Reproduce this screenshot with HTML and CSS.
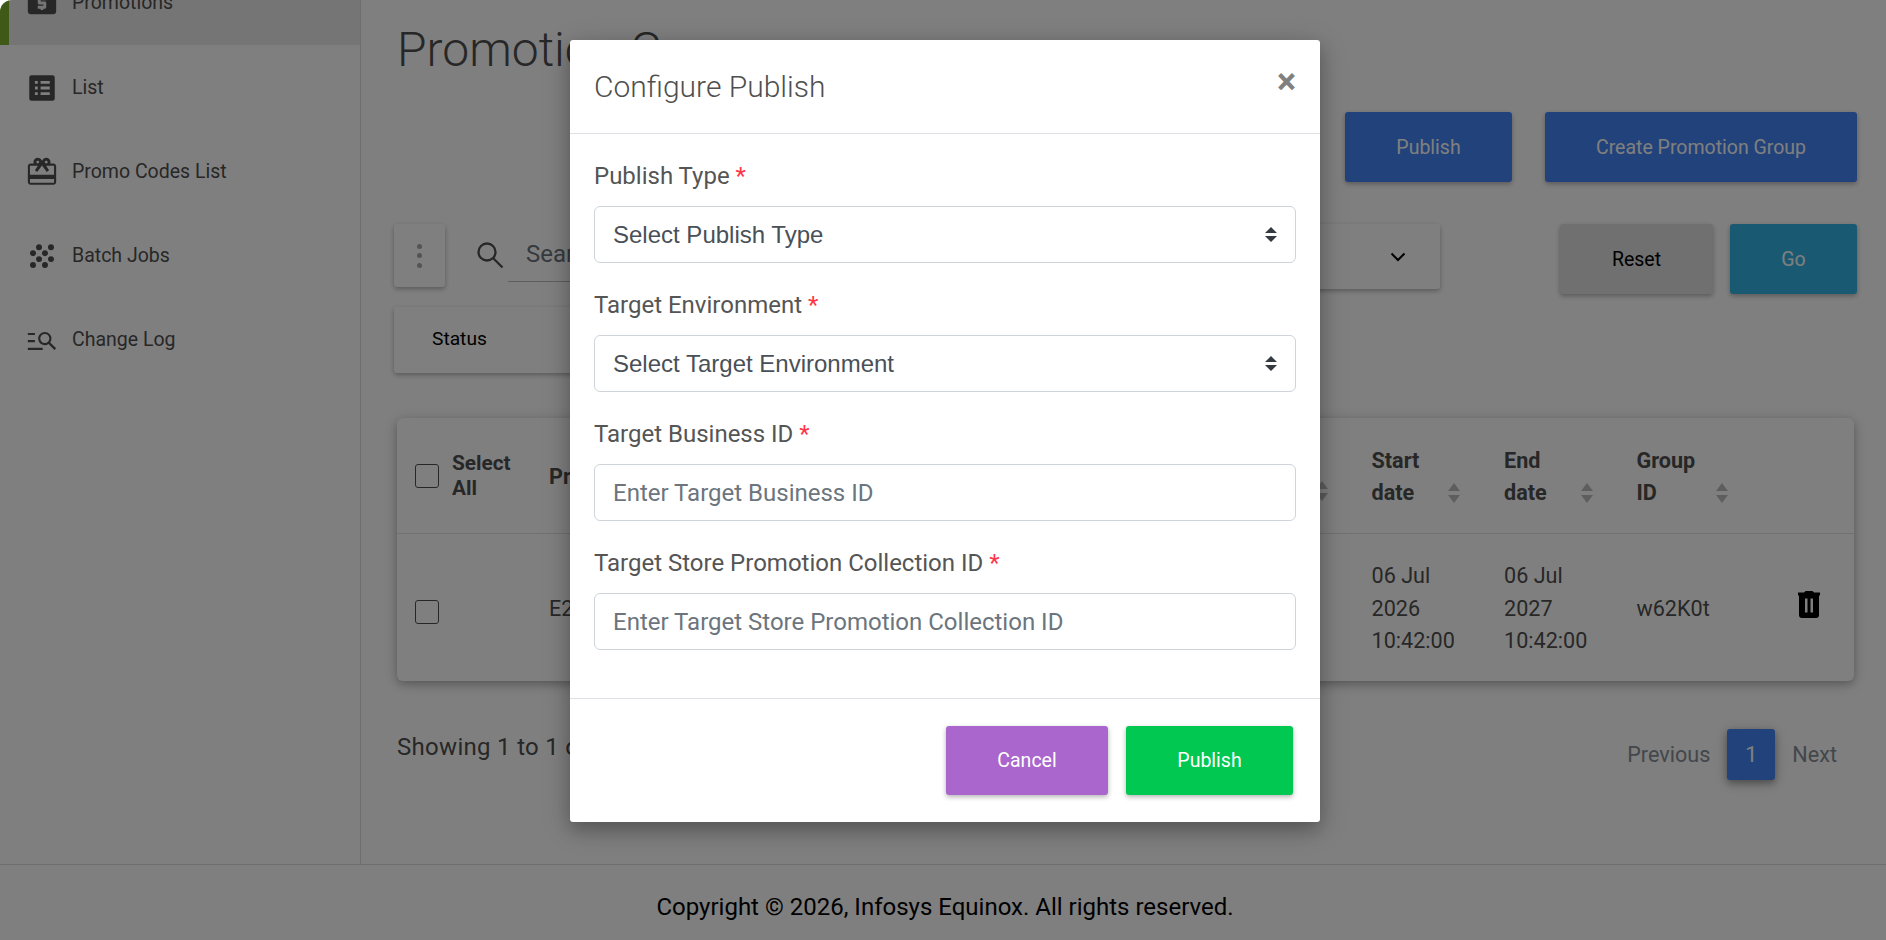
FILE: index.html
```html
<!DOCTYPE html>
<html lang="en">
<head>
    <meta charset="UTF-8">
    <meta name="viewport" content="width=device-width, initial-scale=1.0">
    <title>Promotion Groups</title>
    <link rel="stylesheet" href="styles.css">
</head>
<body>
    <div class="app">
        <div class="page">
            <nav class="sidebar">
                <a class="nav-item active">
                    <svg class="nav-icon" viewBox="0 0 24 24"><path d="M20 4H4c-1.110 0-2 .9-2 2v12c0 1.100.89 2 2 2h16c1.110 0 2-.9 2-2V6c0-1.100-.89-2-2-2zm-5 6h-4v1h3c.55 0 1 .45 1 1v3c0 .55-.45 1-1 1h-1v1h-2v-1H9v-2h4v-1h-3c-.55 0-1-.45-1-1V9c0-.55.45-1 1-1h1V7h2v1h2v2z"/></svg>
                    <span>Promotions</span>
                </a>
                <a class="nav-item">
                    <svg class="nav-icon" viewBox="0 0 24 24"><path d="M19.500 3h-15A1.500 1.500 0 0 0 3 4.500v15A1.500 1.500 0 0 0 4.500 21h15a1.500 1.500 0 0 0 1.500-1.500v-15A1.500 1.500 0 0 0 19.500 3zM9 17H7v-2h2v2zm0-4H7v-2h2v2zm0-4H7V7h2v2zm8.500 8H11v-2h6.500v2zm0-4H11v-2h6.500v2zm0-4H11V7h6.500v2z"/></svg>
                    <span>List</span>
                </a>
                <a class="nav-item">
                    <svg class="nav-icon" viewBox="0 0 24 24"><path d="M20 6h-2.180c.11-.31.18-.65.18-1 0-1.660-1.340-3-3-3-1.050 0-1.960.54-2.500 1.350l-.5.670-.5-.68C10.960 2.540 10.050 2 9 2 7.340 2 6 3.340 6 5c0 .35.07.69.18 1H4c-1.110 0-1.990.89-1.990 2L2 19c0 1.110.89 2 2 2h16c1.110 0 2-.89 2-2V8c0-1.110-.89-2-2-2zm-5-2c.55 0 1 .45 1 1s-.45 1-1 1-1-.45-1-1 .45-1 1-1zM9 4c.55 0 1 .45 1 1s-.45 1-1 1-1-.45-1-1 .45-1 1-1zm11.500 15.500h-17V17h17v2.500zm0-5.500h-17V7.500h5.580L7 10.830 8.620 12 12 7.400l3.380 4.600L17 10.830 14.920 7.500h5.580V14z"/></svg>
                    <span>Promo Codes List</span>
                </a>
                <a class="nav-item">
                    <svg class="nav-icon" viewBox="0 0 24 24"><circle cx="9.900" cy="5.800" r="2.100"/><circle cx="18.350" cy="5.800" r="2.100"/><circle cx="5.650" cy="10" r="2.100"/><circle cx="14.100" cy="10" r="2.100"/><circle cx="9.900" cy="14.200" r="2.100"/><circle cx="18.350" cy="14.200" r="2.100"/><circle cx="5.650" cy="18.400" r="2.100"/><circle cx="14.100" cy="18.400" r="2.100"/></svg>
                    <span>Batch Jobs</span>
                </a>
                <a class="nav-item">
                    <svg class="nav-icon" viewBox="0 0 24 24"><path d="M7 8.500H2V7h5v1.500zM7 12H2v1.500h5V12zm13.800 7l-4.200-4.200c-.8.600-1.700.9-2.600.9-2.760 0-4.700-2.200-4.700-4.700s2.100-4.700 4.700-4.700 4.700 2.100 4.700 4.700c0 1-.3 1.900-.9 2.700L22 17.900 20.800 19zM17.200 11c0-1.800-1.400-3.200-3.200-3.200S10.800 9.200 10.800 11s1.400 3.200 3.200 3.200 3.200-1.400 3.200-3.200zM2 19h10.500v-1.500H2V19z"/></svg>
                    <span>Change Log</span>
                </a>
            </nav>

            <main class="main">
                <h1 class="page-title">Promotion Groups</h1>

                <div class="actions">
                    <button class="btn btn-blue">Publish</button>
                    <button class="btn btn-blue">Create Promotion Group</button>
                </div>

                <div class="filters">
                    <button class="kebab"><i></i><i></i><i></i></button>
                    <svg class="search-icon" viewBox="0 0 27 27"><circle cx="10" cy="10" r="8.500"/><path d="M16 16l9.500 9.500"/></svg>
                    <input class="search" type="text" placeholder="Search">
                    <div class="dropdown">
                        <svg class="chevron" viewBox="0 0 16 10"><path d="M1.500 1.500L8 8l6.500-6.500"/></svg>
                    </div>
                    <button class="btn btn-grey">Reset</button>
                    <button class="btn btn-cyan">Go</button>
                </div>

                <div class="dropdown status">Status</div>

                <table class="groups">
                    <colgroup>
                        <col class="col-check"><col class="col-name"><col>
                        <col class="col-date"><col class="col-date"><col class="col-date"><col class="col-action">
                    </colgroup>
                    <thead>
                        <tr>
                            <th class="check"><div class="select-all"><span class="box"></span><span>Select<br>All</span></div></th>
                            <th>Promotion</th>
                            <th><div class="sortable end"><svg class="sort" viewBox="0 0 14 22"><path d="M7 1l6 8H1zM7 21l6-8H1z"/></svg></div></th>
                            <th><div class="sortable"><span>Start<br>date</span><svg class="sort" viewBox="0 0 14 22"><path d="M7 1l6 8H1zM7 21l6-8H1z"/></svg></div></th>
                            <th><div class="sortable"><span>End<br>date</span><svg class="sort" viewBox="0 0 14 22"><path d="M7 1l6 8H1zM7 21l6-8H1z"/></svg></div></th>
                            <th><div class="sortable last"><span>Group<br>ID</span><svg class="sort" viewBox="0 0 14 22"><path d="M7 1l6 8H1zM7 21l6-8H1z"/></svg></div></th>
                            <th></th>
                        </tr>
                    </thead>
                    <tbody>
                        <tr>
                            <td class="check"><div class="box"></div></td>
                            <td>E2E</td>
                            <td></td>
                            <td>06 Jul<br>2026<br>10:42:00</td>
                            <td>06 Jul<br>2027<br>10:42:00</td>
                            <td>w62K0t</td>
                            <td><svg class="trash" viewBox="0 0 22 27"><path d="M0 1.500h6L7.500 0h7L16 1.500h6v3h-1V24a3 3 0 0 1-3 3H4a3 3 0 0 1-3-3V4.500H0zM7 7.500v14h2.500v-14zm5.500 0v14H15v-14z"/></svg></td>
                        </tr>
                    </tbody>
                </table>

                <div class="table-foot">
                    <p class="showing">Showing 1 to 1 of 1 entries</p>
                    <div class="pagination">
                        <span>Previous</span>
                        <span class="current">1</span>
                        <span>Next</span>
                    </div>
                </div>
            </main>
        </div>

        <footer class="footer">Copyright © 2026, Infosys Equinox. All rights reserved.</footer>

        <div class="backdrop">
            <div class="modal">
                <div class="modal-header">
                    <h2 class="modal-title">Configure Publish</h2>
                    <button class="close">×</button>
                </div>
                <div class="modal-body">
                    <label class="label">Publish Type <b>*</b></label>
                    <div class="field select">
                        <span>Select Publish Type</span>
                        <svg class="arrows" viewBox="0 0 12 15"><path d="M6 0l6 6H0zM6 15l6-6H0z"/></svg>
                    </div>
                    <label class="label">Target Environment <b>*</b></label>
                    <div class="field select">
                        <span>Select Target Environment</span>
                        <svg class="arrows" viewBox="0 0 12 15"><path d="M6 0l6 6H0zM6 15l6-6H0z"/></svg>
                    </div>
                    <label class="label">Target Business ID <b>*</b></label>
                    <input class="field" type="text" placeholder="Enter Target Business ID">
                    <label class="label">Target Store Promotion Collection ID <b>*</b></label>
                    <input class="field" type="text" placeholder="Enter Target Store Promotion Collection ID">
                </div>
                <div class="modal-footer">
                    <button class="btn btn-purple">Cancel</button>
                    <button class="btn btn-green">Publish</button>
                </div>
            </div>
        </div>
    </div>
</body>
</html>
```
FILE: styles.css
```css
* {
    box-sizing: border-box;
}

body {
    margin: 0;
    background: #fff;
    font-family: Roboto, sans-serif;
    font-size: 24px;
    color: #4f4f4f;
}

h1, h2, p {
    margin: 0;
}

button, input {
    font-family: inherit;
    border: none;
    outline: none;
    background: none;
}

.app {
    position: relative;
    height: 940px;
    overflow: hidden;
    border-top-left-radius: 12px;
}

.page {
    display: flex;
    height: 864px;
}

/* Sidebar */
.sidebar {
    width: 361px;
    flex-shrink: 0;
    border-right: 1px solid #dcdcdc;
    overflow: hidden;
}

.nav-item {
    display: flex;
    align-items: center;
    gap: 13px;
    height: 84px;
    padding-left: 25px;
    font-size: 19.5px;
}

.nav-item.active {
    margin-top: -39px;
    padding: 0 0 2px 16px;
    border-left: 9px solid #7fb52f;
    background: #ebebeb;
}

.nav-icon {
    width: 34px;
    height: 34px;
    margin-top: 2px;
    fill: #4f4f4f;
}

/* Main */
.main {
    flex: 1;
    padding: 21px 29px 0 33px;
}

.page-title {
    height: 58px;
    padding-left: 3px;
    line-height: 58px;
    font-size: 48px;
    font-weight: 300;
}

.btn {
    height: 70px;
    padding: 0;
    border-radius: 3px;
    font-size: 19.5px;
    color: #fff;
    box-shadow: 0 2px 5px rgba(0, 0, 0, 0.3);
}

.actions {
    display: flex;
    justify-content: flex-end;
    gap: 33px;
    margin-top: 33px;
}

.btn-blue {
    width: 167px;
    background: #4285f4;
}

.btn-blue + .btn-blue {
    width: 312px;
}

.filters {
    display: flex;
    height: 70px;
    margin-top: 42px;
}

.kebab {
    display: flex;
    flex-direction: column;
    align-items: center;
    justify-content: center;
    gap: 4.500px;
    width: 51px;
    height: 63px;
    padding: 0;
    border-radius: 3px;
    box-shadow: 0 2px 5px rgba(0, 0, 0, 0.3);
}

.kebab i {
    width: 5px;
    height: 5px;
    border-radius: 50%;
    background: #a8a8a8;
}

.search-icon {
    width: 27px;
    height: 27px;
    margin: 18px 4px 0 32px;
    fill: none;
    stroke: #4f4f4f;
    stroke-width: 2.300;
}

.search {
    width: 332px;
    height: 58px;
    padding: 3px 0 0 18px;
    border-bottom: 1px solid #bdbdbd;
    font-size: 24px;
}

.search::placeholder,
.field::placeholder {
    color: #6c757d;
    opacity: 1;
}

.dropdown {
    display: flex;
    align-items: center;
    justify-content: flex-end;
    width: 500px;
    height: 65px;
    margin-left: 100px;
    padding-right: 34px;
    border-radius: 3px;
    box-shadow: 0 2px 5px rgba(0, 0, 0, 0.3);
}

.dropdown.status {
    justify-content: flex-start;
    width: 420px;
    height: 66px;
    margin: 13px 0 0;
    padding: 0 0 4px 38px;
    font-size: 19.2px;
    color: #000;
}

.chevron {
    width: 16px;
    height: 10px;
    fill: none;
    stroke: #000;
    stroke-width: 2;
}

.btn-grey {
    width: 153px;
    margin-left: auto;
    background: #e0e0e0;
    color: #000;
}

.btn-cyan {
    width: 127px;
    margin-left: 17px;
    background: #33b5e5;
}

/* Table */
.groups {
    width: 1457px;
    margin: 45px 0 0 3px;
    table-layout: fixed;
    border-collapse: separate;
    border-spacing: 0;
    border-radius: 6px;
    font-size: 21.6px;
    line-height: 32.4px;
    text-align: left;
    box-shadow: 0 3px 7px rgba(0, 0, 0, 0.16), 0 3px 15px rgba(0, 0, 0, 0.2);
}

.groups th,
.groups td {
    padding: 3px 0 0;
    vertical-align: middle;
}

.groups th {
    height: 116px;
    border-bottom: 1px solid #dee2e6;
    font-weight: 700;
}

.groups td {
    height: 147px;
}

.groups .check {
    padding: 1px 0 0 18px;
}

.groups td.check {
    padding-top: 8px;
}

.col-check { width: 152px; }
.col-name { width: 275px; }
.col-date { width: 132.5px; }
.col-action { width: 85px; }

.select-all {
    display: flex;
    align-items: center;
    gap: 13px;
    font-size: 20.8px;
    line-height: 25px;
}

.box {
    width: 24px;
    height: 24px;
    border: 1.500px solid #4f4f4f;
    border-radius: 3px;
}

.sortable {
    display: flex;
    align-items: flex-end;
    justify-content: space-between;
    padding-right: 43px;
}

.sortable.end {
    justify-content: flex-end;
    padding-top: 32px;
}

.sortable.last {
    padding-right: 40px;
}

.sort {
    width: 14px;
    height: 22px;
    margin-bottom: 5px;
    fill: #bdbdbd;
}

.trash {
    display: block;
    width: 22px;
    height: 27px;
    margin: -10px 0 0 29px;
}

.table-foot {
    display: flex;
    justify-content: space-between;
    margin-top: 48px;
    padding: 0 20px 0 3px;
}

.showing {
    line-height: 36px;
    letter-spacing: 0.3px;
}

.pagination {
    display: flex;
    gap: 17px;
    height: 51px;
    line-height: 51px;
    font-size: 21.6px;
    color: #868e96;
}

.current {
    width: 48px;
    border-radius: 3px;
    background: #4285f4;
    color: #fff;
    text-align: center;
    box-shadow: 0 3px 7px rgba(0, 0, 0, 0.3), 0 3px 15px rgba(0, 0, 0, 0.2);
}

.footer {
    height: 76px;
    padding-left: 4px;
    border-top: 1px solid #dcdcdc;
    line-height: 84px;
    text-align: center;
    color: #000;
}

/* Modal */
.backdrop {
    position: absolute;
    inset: 0;
    padding: 40px 0 0 4px;
    background: rgba(0, 0, 0, 0.5);
}

.modal {
    width: 750px;
    height: 782px;
    margin: 0 auto;
    background: #fff;
    border-radius: 3px;
    box-shadow: 0 8px 17px rgba(0, 0, 0, 0.2), 0 6px 30px rgba(0, 0, 0, 0.2);
}

.modal-header {
    display: flex;
    justify-content: space-between;
    height: 94px;
    padding: 24px;
    border-bottom: 1px solid #dee2e6;
}

.modal-title {
    line-height: 45px;
    font-size: 30px;
    font-weight: 300;
}

.close {
    height: 36px;
    padding: 0;
    line-height: 36px;
    font-size: 36px;
    font-weight: 700;
    color: #808080;
}

.modal-body {
    height: 564px;
    padding: 24px;
}

.label {
    display: block;
    height: 36px;
    margin-bottom: 12px;
    line-height: 36px;
    color: #555;
}

.label b {
    font-weight: 400;
    color: #ff3547;
}

.field {
    display: block;
    width: 702px;
    height: 57px;
    margin-bottom: 24px;
    padding: 0 18px;
    border: 1px solid #ced4da;
    border-radius: 6px;
    font-size: 24px;
    color: #495057;
}

.select {
    display: flex;
    align-items: center;
    justify-content: space-between;
    font-family: "Liberation Sans", sans-serif;
}

.arrows {
    width: 12px;
    height: 15px;
    fill: #343a40;
}

.modal-footer {
    display: flex;
    justify-content: flex-end;
    gap: 18px;
    padding: 27px;
    border-top: 1px solid #dee2e6;
}

.btn-purple {
    width: 162px;
    background: #aa66cc;
}

.btn-green {
    width: 167px;
    background: #00c851;
}

.modal-footer .btn {
    height: 69px;
}
```
